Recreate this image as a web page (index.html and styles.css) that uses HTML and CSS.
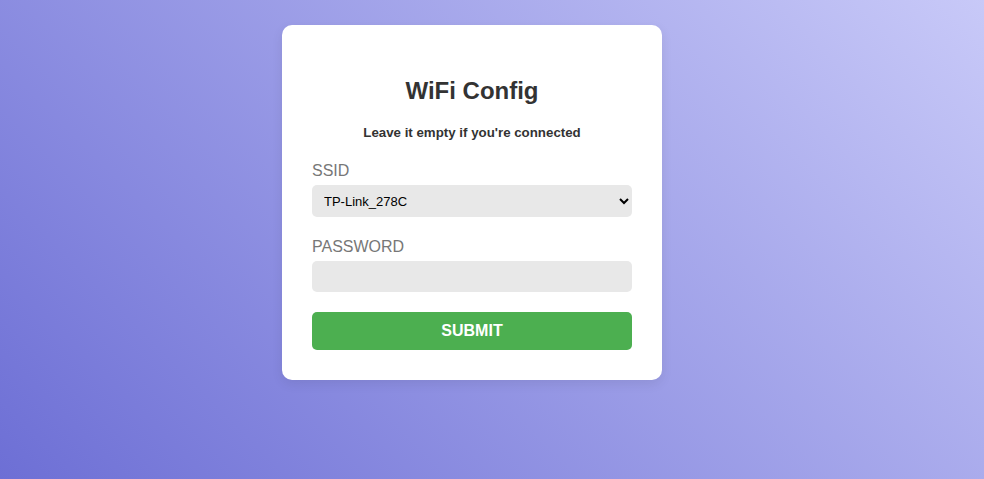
FILE: index.html
```html
<!DOCTYPE html>
<html>
<head>
<meta charset="utf-8">
<link rel="stylesheet" href="styles.css">
</head>
<body>
<div class="page">
  <form class="card">
    <h2 class="title">WiFi Config</h2>
    <p class="hint">Leave it empty if you're connected</p>
    <label class="label" for="ssid">SSID</label>
    <select class="field select" id="ssid">
      <option>TP-Link_278C</option>
    </select>
    <label class="label" for="pw">PASSWORD</label>
    <input class="field input" id="pw" type="password">
    <button class="submit" type="button">SUBMIT</button>
  </form>
</div>
</body>
</html>
```
FILE: styles.css
```css
* { box-sizing: border-box; }
html, body { margin: 0; height: 100%; }
body {
  font-family: "Liberation Sans", Arial, sans-serif;
  background: linear-gradient(45deg, #6d6fd5 0%, #c8c9f8 100%);
}
.page {
  display: flex;
  justify-content: center;
  padding-top: 25px;
  padding-right: 40px;
}
.card {
  width: 380px;
  background: #fff;
  border-radius: 10px;
  padding: 30px;
  box-shadow: 0 4px 12px rgba(0, 0, 0, 0.08);
  display: flex;
  flex-direction: column;
}
.title {
  margin: 22px 0 20px;
  font-size: 24px;
  font-weight: bold;
  color: #333;
  text-align: center;
  line-height: 28px;
}
.hint {
  margin: 0 0 22px;
  font-size: 13.3px;
  font-weight: bold;
  color: #333;
  text-align: center;
  line-height: 15px;
}
.label {
  font-size: 16px;
  color: #777;
  line-height: 18px;
  margin-bottom: 5px;
}
.field {
  width: 320px;
  border: none;
  border-radius: 5px;
  background: #e8e8e8;
  font-family: "Liberation Sans", Arial, sans-serif;
  font-size: 13px;
  outline: none;
}
.select {
  height: 32px;
  padding: 0 6px 0 8px;
  color: #000;
  margin-bottom: 21px;
}
.input {
  height: 31px;
  padding: 0 10px;
  margin-bottom: 20px;
}
.submit {
  height: 38px;
  width: 320px;
  border: none;
  border-radius: 5px;
  background: #4caf50;
  color: #fff;
  font-family: "Liberation Sans", Arial, sans-serif;
  font-size: 16px;
  font-weight: bold;
}
```
